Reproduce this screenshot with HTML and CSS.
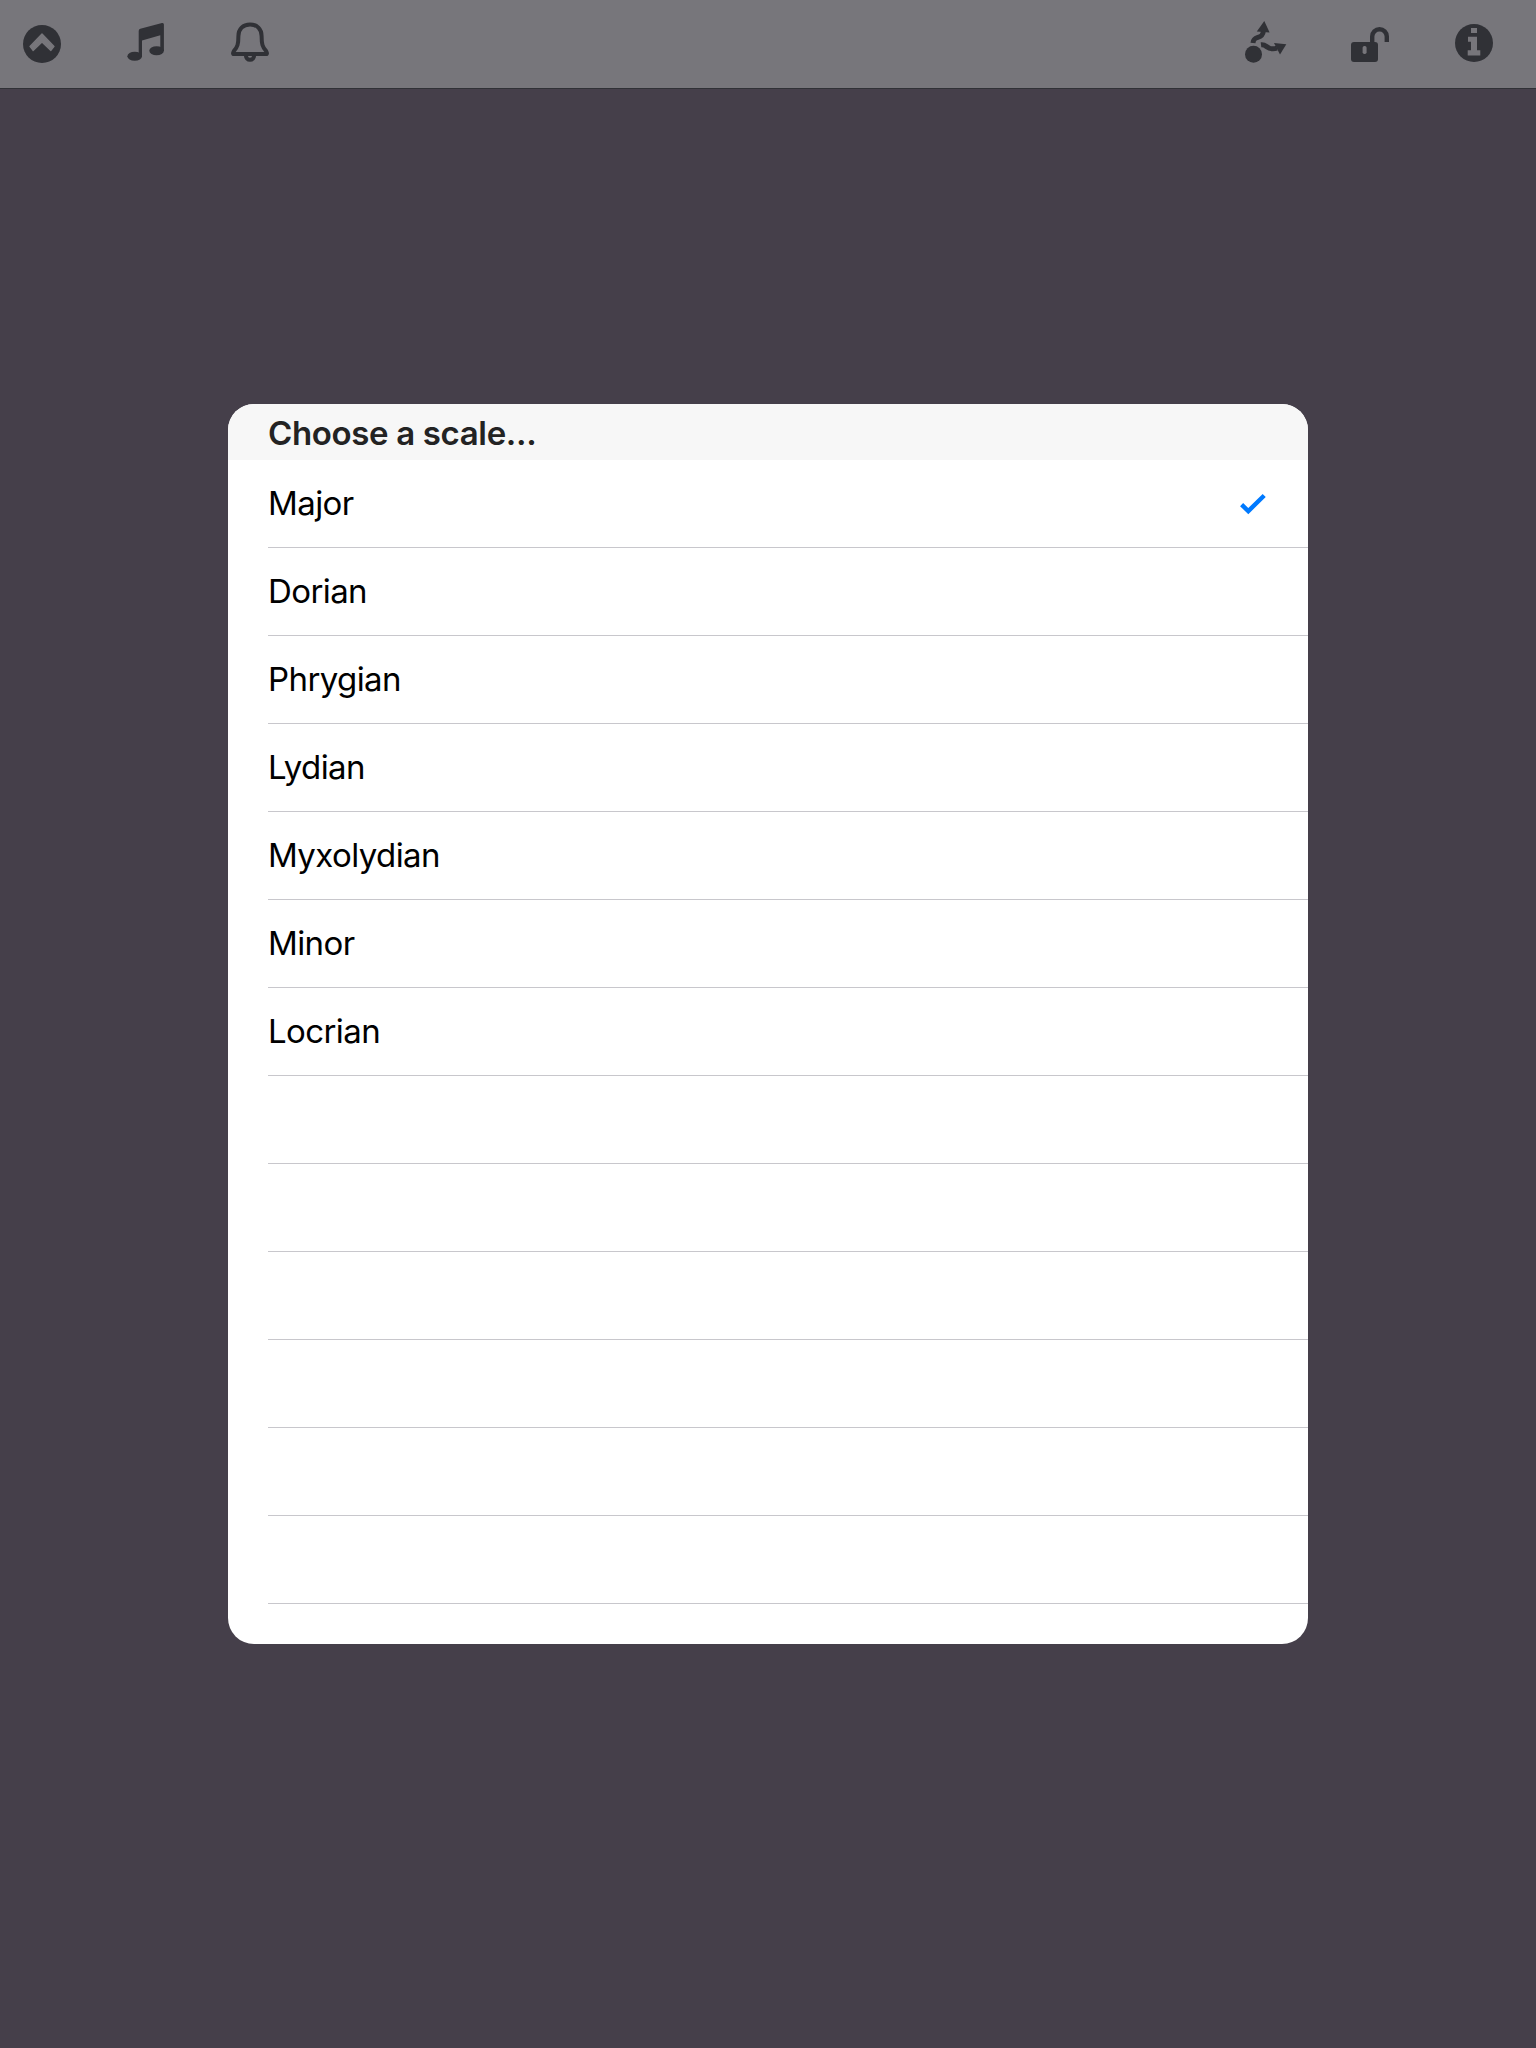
FILE: index.html
```html
<!DOCTYPE html>
<html lang="en">
<head>
  <meta charset="UTF-8">
  <meta name="viewport" content="width=device-width, initial-scale=1.0">
  <title>Choose a scale</title>
  <link rel="stylesheet" href="styles.css">
</head>
<body>

  <header class="toolbar">
    <div class="toolbar-group">
      <svg class="icon" viewBox="0 0 44 44">
        <circle cx="22" cy="22" r="19"/>
        <path class="chevron" d="M22 12.1 L34 24.4 L30.9 28.4 L22 20.1 L13.1 28.4 L10 24.4 Z"/>
      </svg>
      <svg class="icon" viewBox="0 0 44 44">
        <ellipse cx="10.7" cy="34.2" rx="7.3" ry="4.5"/>
        <ellipse cx="32.6" cy="28.7" rx="7.3" ry="4.5"/>
        <path d="M14.7 34 V9 Q14.7 7.3 16.3 6.8 L38 1 Q39.9 .6 39.9 2.5 V29 H36.3 V13.2 L18 18.4 V34 Z"/>
      </svg>
      <svg class="icon" viewBox="0 0 44 44">
        <path class="line" d="M22 2.4 C15 2.4 10.4 7 10.4 14 C10.4 22 9.6 25 5.8 29.2 Q4.2 32 6 32 H38 Q39.8 32 38.2 29.2 C34.4 25 33.6 22 33.6 14 C33.6 7 29 2.4 22 2.4 Z"/>
        <path class="line" d="M17.9 33.5 A4.1 4.3 0 0 0 26.1 33.5"/>
      </svg>
    </div>
    <div class="toolbar-group">
      <svg class="icon" viewBox="0 0 44 44">
        <circle cx="9.5" cy="32.3" r="8.5"/>
        <path class="line arrow" d="M9 21 C9.5 12.5 18.4 18.5 19.4 9"/>
        <path d="M20.3 -1 L25.6 10.6 L12.8 9.6 Z"/>
        <path class="line arrow" d="M17 22.8 C23.5 22 22.5 29 33 26.2"/>
        <path d="M42.3 22.2 L30 21 L36 32.4 Z"/>
      </svg>
      <svg class="icon" viewBox="0 0 44 44">
        <rect x="3" y="20" width="27" height="20" rx="3"/>
        <rect class="cutout" x="14.6" y="24" width="4" height="8" rx="1.8"/>
        <path class="line shackle" d="M24.2 21 V14.5 A7.3 7.3 0 0 1 38.8 14.5 V20"/>
      </svg>
      <svg class="icon" viewBox="0 0 44 44">
        <circle cx="22" cy="21" r="19"/>
        <path class="cutout" d="M19 6 H25 V11 H19 Z M16 14.8 H25 V28.2 H28.3 V33.4 H15.7 V28.2 H19 V19.8 H16 Z"/>
      </svg>
    </div>
  </header>

  <main class="content">
    <section class="dialog">
      <h1 class="dialog-title">Choose a scale...</h1>
      <ul class="scale-list">
        <li class="scale selected">
          <span>Major</span>
          <svg class="check" viewBox="0 0 26 20"><path d="M1.6 10.6 L8.3 17.1 L24.2 1.5"/></svg>
        </li>
        <li class="scale">Dorian</li>
        <li class="scale">Phrygian</li>
        <li class="scale">Lydian</li>
        <li class="scale">Myxolydian</li>
        <li class="scale">Minor</li>
        <li class="scale">Locrian</li>
        <li class="scale"></li>
        <li class="scale"></li>
        <li class="scale"></li>
        <li class="scale"></li>
        <li class="scale"></li>
        <li class="scale"></li>
      </ul>
    </section>
  </main>

</body>
</html>
```
FILE: styles.css
```css
* {
    box-sizing: border-box;
}

body {
    margin: 0;
    height: 100vh;
    background-color: #453f4a;
    font-family: Inter, "Liberation Sans", sans-serif;
    font-size: 33px;
    color: #000;
    display: flex;
    flex-direction: column;
    overflow: hidden;
}

.toolbar {
    display: flex;
    justify-content: space-between;
    height: 89px;
    padding: 22px 40px 0 20px;
    background-color: #77767b;
    border-bottom: 1px solid #303136;
}

.toolbar-group {
    display: flex;
    gap: 60px;
}

.icon {
    display: block;
    width: 44px;
    height: 44px;
    fill: #303136;
    overflow: visible;
}

.icon .line {
    fill: none;
    stroke: #303136;
    stroke-width: 4;
}

.icon .shackle {
    stroke-width: 4.4;
}

.icon .arrow {
    stroke-width: 5;
}

.icon .cutout {
    fill: #77767b;
}

.icon .chevron {
    fill: #77767b;
    stroke: #77767b;
    stroke-width: 1.4;
    stroke-linejoin: round;
}

.content {
    flex: 1;
    display: flex;
    justify-content: center;
    align-items: flex-start;
    padding-top: 315px;
}

.dialog {
    width: 1080px;
    height: 1240px;
    background-color: #fff;
    border-radius: 26px;
    overflow: hidden;
}

.dialog-title {
    margin: 0;
    height: 56px;
    padding-left: 40px;
    background-color: #f7f7f7;
    color: #232323;
    font-size: 33px;
    font-weight: 600;
    line-height: 59px;
    letter-spacing: -0.35px;
}

.scale-list {
    list-style: none;
    margin: 0;
    padding: 0 0 0 40px;
}

.scale {
    display: flex;
    justify-content: space-between;
    align-items: center;
    height: 88px;
    padding: 0 42px 1px 0;
    border-bottom: 1px solid #c8c7cc;
    letter-spacing: -0.6px;
}

.check {
    width: 26px;
    height: 20px;
    margin-top: 2px;
    fill: none;
    stroke: #007aff;
    stroke-width: 4.4;
    overflow: visible;
}
```
